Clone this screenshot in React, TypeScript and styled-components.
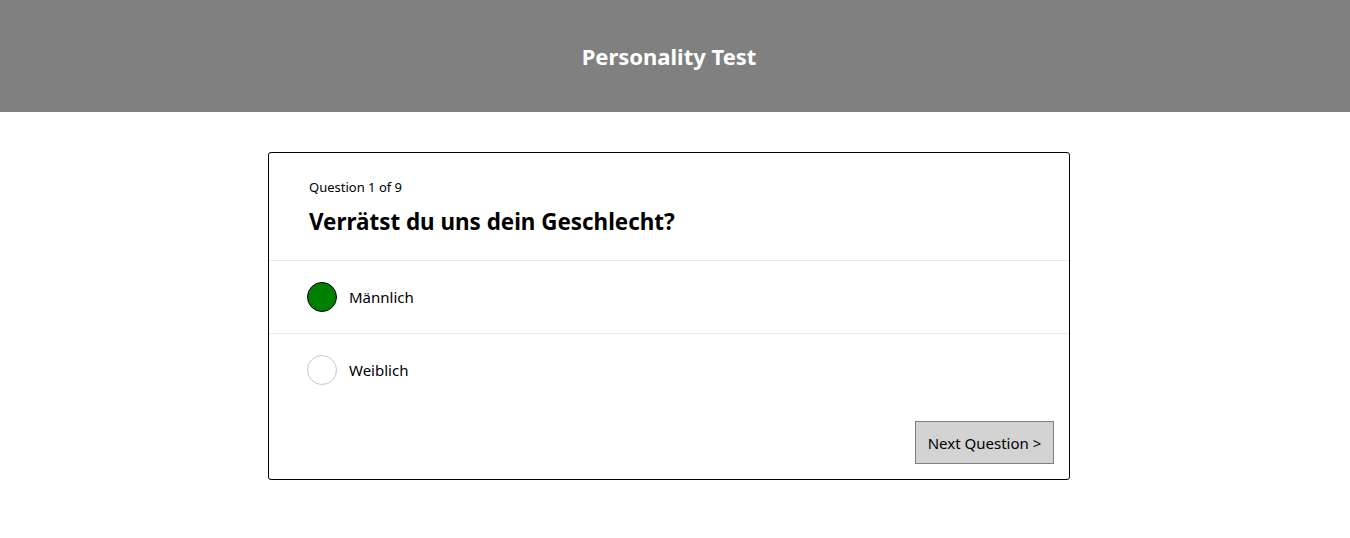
import React, { useState } from "react";
import styled, { createGlobalStyle } from "styled-components";

const Global = createGlobalStyle`
  html, body { margin: 0; padding: 0; background: #fff; }
  body { font-family: "Noto Sans", "Open Sans", sans-serif; color: #000; }
`;

const Header = styled.header`
  height: 112px;
  background: #808080;
  display: flex;
  align-items: center;
  justify-content: center;
  padding-right: 12px;
`;

const Title = styled.h1`
  margin: 0;
  color: #fff;
  font-size: 22px;
  font-weight: 700;
`;

const Main = styled.main`
  display: flex;
  justify-content: center;
  padding: 40px 12px 0 0;
`;

const Card = styled.section`
  width: 800px;
  border: 1px solid #000;
  border-radius: 3px;
  display: flex;
  flex-direction: column;
`;

const Head = styled.div`
  padding: 25px 40px 23px;
  border-bottom: 1px solid #eaeaea;
`;

const Counter = styled.div`
  font-size: 13px;
  line-height: 18px;
`;

const Question = styled.h2`
  margin: 11px 0 0;
  font-size: 22.4px;
  line-height: 30px;
  font-weight: 700;
`;

const Option = styled.label<{ $last?: boolean }>`
  display: flex;
  align-items: center;
  gap: 12px;
  height: 72px;
  padding-left: 38px;
  border-bottom: ${(p) => (p.$last ? "none" : "1px solid #eaeaea")};
  cursor: pointer;
  font-size: 15px;
`;

const Radio = styled.span<{ $on: boolean }>`
  width: 28px;
  height: 28px;
  border-radius: 50%;
  border: 1px solid ${(p) => (p.$on ? "#000" : "#c8c8c8")};
  background: ${(p) => (p.$on ? "#008000" : "#fff")};
  flex: none;
`;

const Footer = styled.div`
  display: flex;
  justify-content: flex-end;
  padding: 15px 15px 15px;
`;

const NextButton = styled.button`
  width: 139px;
  height: 43px;
  background: #d3d3d3;
  border: 1px solid #808080;
  font-family: inherit;
  font-size: 15px;
  color: #000;
  padding: 0;
  cursor: pointer;
`;

export default function App() {
  const [sel, setSel] = useState(0);
  const opts = ["Männlich", "Weiblich"];
  return (
    <>
      <Global />
      <Header>
        <Title>Personality Test</Title>
      </Header>
      <Main>
        <Card>
          <Head>
            <Counter>Question 1 of 9</Counter>
            <Question>Verrätst du uns dein Geschlecht?</Question>
          </Head>
          {opts.map((o, i) => (
            <Option key={o} $last={i === opts.length - 1} onClick={() => setSel(i)}>
              <Radio $on={sel === i} />
              {o}
            </Option>
          ))}
          <Footer>
            <NextButton>Next Question &gt;</NextButton>
          </Footer>
        </Card>
      </Main>
    </>
  );
}
